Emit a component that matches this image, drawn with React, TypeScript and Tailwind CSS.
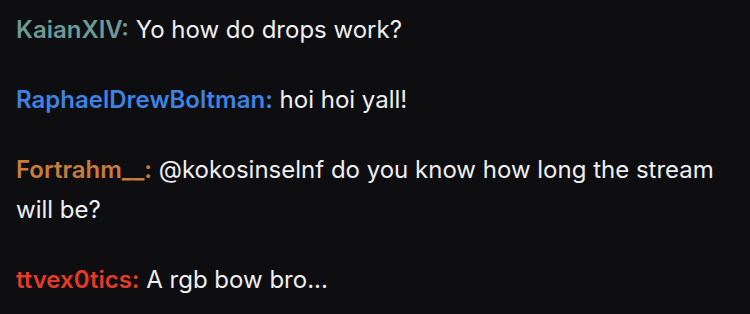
const messages = [
  { user: 'KaianXIV', color: 'text-[#6d9a99]', text: 'Yo how do drops work?' },
  { user: 'RaphaelDrewBoltman', color: 'text-[#3f82e2]', text: 'hoi hoi yall!' },
  { user: 'Fortrahm__', color: 'text-[#c67b3f]', text: '@kokosinselnf do you know how long the stream will be?' },
  { user: 'ttvex0tics', color: 'text-[#e5392b]', text: 'A rgb bow bro...' },
];

export default function App() {
  return (
    <div className="w-[750px] h-[314px] bg-[#0e0e10] font-['Inter',sans-serif] text-[24px] leading-[40px] text-[#efeff1] pl-4 pr-4 pt-[10px] overflow-hidden">
      <div className="flex flex-col gap-[30px]">
        {messages.map((m, i) => (
          <p key={i}>
            <span className={`font-semibold ${m.color}`}>{m.user}:</span> {m.text}
          </p>
        ))}
      </div>
    </div>
  );
}
